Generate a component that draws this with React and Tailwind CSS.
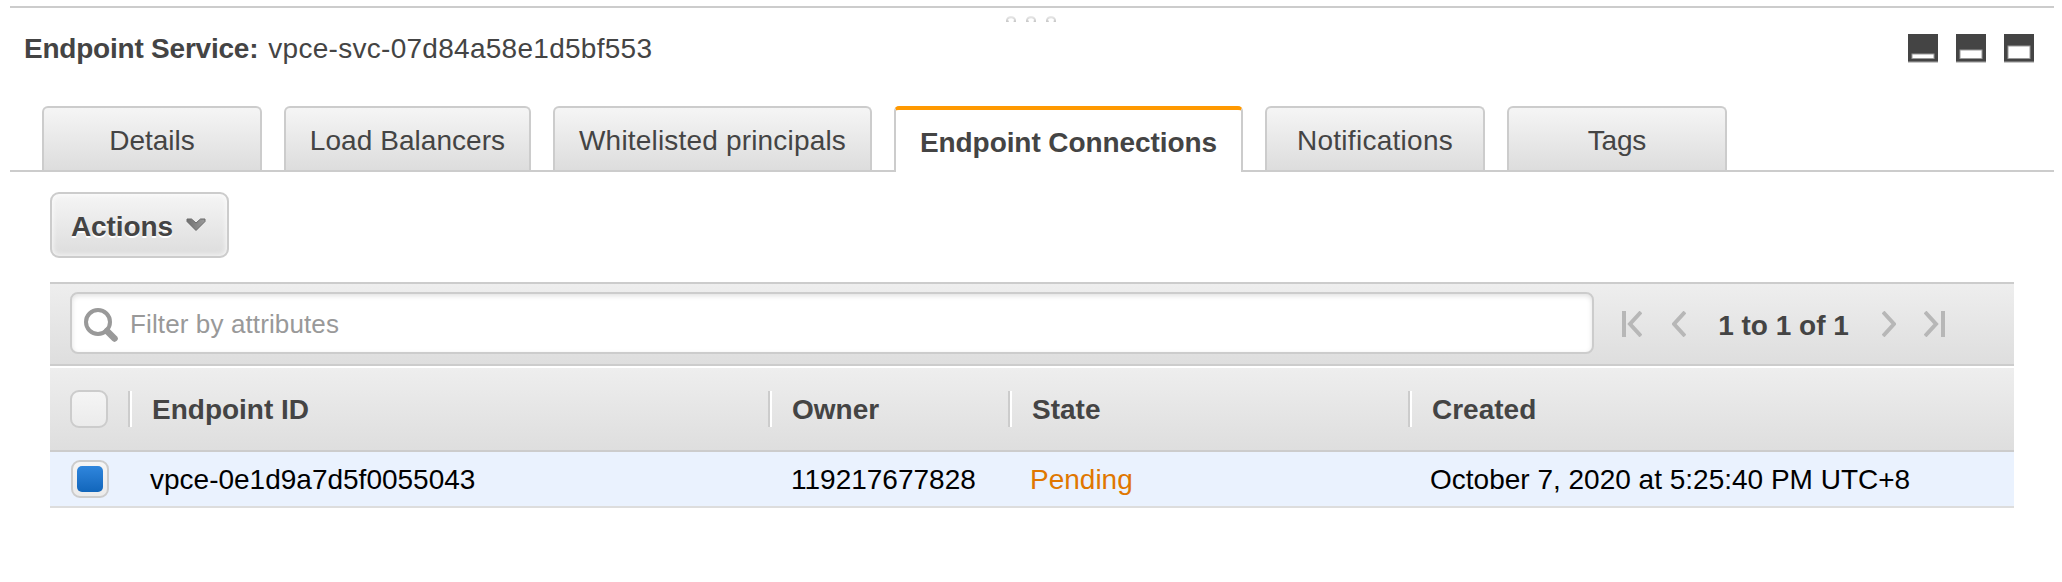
const tabs = [
  { label: "Details", box: "w-[220px]", ls: "tracking-normal" },
  { label: "Load Balancers", box: "w-[247px]", ls: "tracking-[0.05px]" },
  { label: "Whitelisted principals", box: "w-[319px]", ls: "tracking-[0.18px]" },
  { label: "Endpoint Connections", box: "w-[349px]", ls: "tracking-[-0.08px]", active: true },
  { label: "Notifications", box: "w-[220px]", ls: "tracking-[0.28px]" },
  { label: "Tags", box: "w-[220px]", ls: "tracking-[-0.2px]" },
];

const GRAY = "bg-linear-to-b from-[#eeeeee] to-[#dedede]";

function Tab({ label, box, ls, active }) {
  if (active) {
    return (
      <button className={`${box} -mb-[2px] h-[66px] shrink-0 overflow-hidden whitespace-nowrap rounded-t-[5px] border-x-2 border-[#cccccc] border-t-4 border-t-[#ff9900] bg-white pt-[2px] text-[28px] leading-[62px] font-bold`}>
        <span className={ls}>{label}</span>
      </button>
    );
  }
  return (
    <button className={`${box} h-[64px] shrink-0 overflow-hidden whitespace-nowrap rounded-t-[6px] border-2 border-b-0 border-[#cccccc] bg-linear-to-b from-[#f5f5f5] to-[#dddddd] pt-[4px] text-[28px] leading-[58px]`}>
      <span className={ls}>{label}</span>
    </button>
  );
}

function PanelIcon({ top }) {
  return (
    <svg width="30" height="29" viewBox="0 0 30 29">
      <rect width="30" height="27" fill="#444" />
      <rect y="27" width="30" height="1" fill="#777" />
      <rect y="28" width="30" height="1" fill="#c8c8c8" />
      <rect x="4" y={top} width="22" height={24.5 - top} fill="#fff" stroke="#999" strokeWidth="1" />
    </svg>
  );
}

function Chevron({ points, bar, width }) {
  return (
    <svg className="shrink-0" width={width} height="26" viewBox={`0 0 ${width} 26`} fill="none" stroke="#b7b7b7" strokeWidth="4">
      <polyline points={points} />
      {bar !== undefined && <path d={`M${bar} 0V26`} />}
    </svg>
  );
}

function HeadCell({ box, children }) {
  return (
    <div className={`${box} flex h-full shrink-0 items-center`}>
      <div className="h-[36px] w-[4px] border-r-2 border-l-2 border-r-white border-l-[#cccccc]" />
      <span className="ml-[20px] pt-[2px] font-bold whitespace-nowrap">{children}</span>
    </div>
  );
}

export default function App() {
  return (
    <div className="h-[582px] w-[2062px] overflow-hidden bg-white pt-[6px] pr-[8px] pl-[10px] font-['Liberation_Sans',Arial,sans-serif] text-[28px] leading-[32px] text-[#444444]">
      <div className="flex h-[98px] border-t-2 border-[#cccccc]">
        <div className="w-[995px] shrink-0 pt-[25px] pl-[14px] whitespace-nowrap">
          <span className="font-bold tracking-[-0.22px]">Endpoint Service:</span>
          <span className="ml-[10px] tracking-[0.28px]">vpce-svc-07d84a58e1d5bf553</span>
        </div>
        <svg className="mt-[8px]" width="52" height="6" viewBox="0 0 52 6">
          <defs>
            <linearGradient id="grip" x1="0" y1="0" x2="0" y2="1">
              <stop offset="0" stopColor="#ebebeb" />
              <stop offset="1" stopColor="#c8c8c8" />
            </linearGradient>
          </defs>
          {[1, 21, 41].map((x) => (
            <path key={x} transform={`translate(${x} 0)`} d="M0 6V4Q1 0 5 0Q9 0 10 4V6H7.5L8 3.5Q5 1 2 3.5L3 6Z" fill="url(#grip)" />
          ))}
        </svg>
        <div className="mt-[26px] mr-[20px] ml-auto flex gap-[18px]">
          <PanelIcon top={20} />
          <PanelIcon top={16} />
          <PanelIcon top={12} />
        </div>
      </div>
      <div className="mt-[2px] flex h-[66px] gap-[22px] border-b-2 border-[#cccccc] pl-[32px]">
        {tabs.map((t) => (
          <Tab key={t.label} {...t} />
        ))}
      </div>

      <div className="pt-[20px] pr-[40px] pl-[40px]">
        <button className="flex h-[66px] w-[179px] items-center rounded-[9px] border-2 border-[#cccccc] bg-linear-to-b from-[#f5f5f5] to-[#dddddd] pl-[19px] font-bold shadow-[inset_0_0_5px_1px_rgba(255,255,255,0.75)] text-shadow-[0_2px_0_#ffffff]">
          <span className="pt-[3px] tracking-[-0.1px]">Actions</span>
          <svg className="ml-[13px]" width="20" height="14" viewBox="0 0 20 14">
            <defs>
              <linearGradient id="caret" x1="0" y1="0" x2="1" y2="0">
                <stop offset="0" stopColor="#707070" />
                <stop offset="1" stopColor="#9a9a9a" />
              </linearGradient>
            </defs>
            <path d="M1 1H5.5L10 5L14.5 1H19V3.5L10 12.5L1 3.5Z" fill="url(#caret)" stroke="#6a6a6a" strokeWidth="1" />
          </svg>
        </button>

        <div className={`mt-[24px] flex h-[84px] items-center border-y-2 border-[#cccccc] pl-[20px] ${GRAY}`}>
          <div className="-mt-[2px] flex h-[62px] w-[1524px] shrink-0 items-center rounded-[8px] border-2 border-[#cccccc] bg-white pl-[12px] text-[#999999] shadow-[inset_0_2px_5px_rgba(0,0,0,0.12)]">
            <svg className="mt-[4px]" width="34" height="35" viewBox="0 0 34 35" fill="none" stroke="#999">
              <circle cx="14" cy="14" r="12" strokeWidth="4" />
              <path d="M23 23L30.5 30.5" strokeWidth="6.5" strokeLinecap="round" />
            </svg>
            <span className="ml-[12px] pt-[2px] text-[26px] tracking-[0.12px]">Filter by attributes</span>
          </div>
          <div className="ml-[28px] flex items-center whitespace-nowrap">
            <Chevron width={20} points="19,1 8,13 19,25" bar={2} />
            <span className="w-[30px]" />
            <Chevron width={14} points="13,1 2,13 13,25" />
            <span className="w-[196px] shrink-0 pt-[4px] pr-[1px] text-center font-bold">1 to 1 of 1</span>
            <Chevron width={14} points="1,1 12,13 1,25" />
            <span className="w-[28px]" />
            <Chevron width={21} points="1,1 12,13 1,25" bar={19} />
          </div>
        </div>

        <div className={`mt-[2px] flex h-[84px] items-center border-b-2 border-[#cccccc] pl-[20px] ${GRAY}`}>
          <div className="mr-[20px] h-[38px] w-[38px] shrink-0 rounded-[9px] border-2 border-[#cccccc] bg-linear-to-b from-[#f5f5f5] to-[#ebebeb]" />
          <HeadCell box="w-[640px]">Endpoint ID</HeadCell>
          <HeadCell box="w-[240px]">Owner</HeadCell>
          <HeadCell box="w-[400px]">State</HeadCell>
          <HeadCell box="w-[600px]">Created</HeadCell>
        </div>
        <div className="flex h-[56px] items-center border-b-2 border-[#dddddd] bg-[#eaf2fe] pl-[21px] whitespace-nowrap text-black">
          <div className="flex h-[38px] w-[38px] shrink-0 items-center justify-center rounded-[9px] border-2 border-[#cccccc] bg-linear-to-b from-[#f5f5f5] to-[#ebebeb]">
            <div className="h-[26px] w-[26px] rounded-[5px] bg-linear-to-b from-[#2f86dd] to-[#1166bb]" />
          </div>
          <div className="flex pt-[2px]">
            <span className="ml-[41px] w-[641px] shrink-0">vpce-0e1d9a7d5f0055043</span>
            <span className="w-[239px] shrink-0">119217677828</span>
            <span className="w-[400px] shrink-0 text-[#e07700]">Pending</span>
            <span>October 7, 2020 at 5:25:40 PM UTC+8</span>
          </div>
        </div>
      </div>
    </div>
  );
}
